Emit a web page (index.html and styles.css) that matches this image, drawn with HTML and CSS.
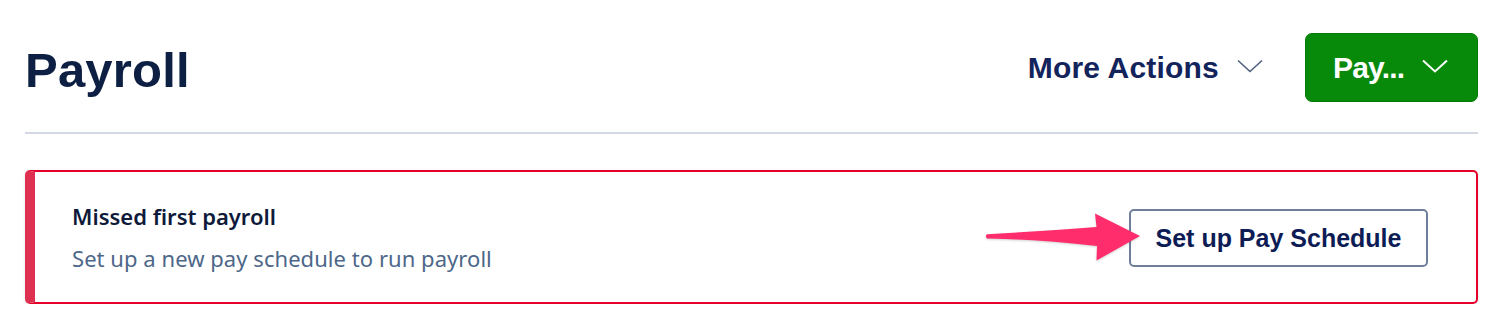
FILE: index.html
```html
<!DOCTYPE html>
<html lang="en">
<head>
<meta charset="utf-8">
<title>Payroll</title>
<link rel="stylesheet" href="styles.css">
</head>
<body>
<div class="page">
  <header class="page-header">
    <h1 class="page-title">Payroll</h1>
    <div class="header-actions">
      <button class="link-menu" type="button">
        <span>More Actions</span>
        <svg class="chev" width="26" height="14" viewBox="0 0 26 14"><path d="M1 1.5 L13 12.5 L25 1.5" fill="none" stroke="currentColor" stroke-width="1.6"/></svg>
      </button>
      <button class="primary-menu" type="button">
        <span>Pay...</span>
        <svg class="chev" width="26" height="14" viewBox="0 0 26 14"><path d="M1 1.5 L13 12.5 L25 1.5" fill="none" stroke="currentColor" stroke-width="2"/></svg>
      </button>
    </div>
  </header>
  <hr class="divider">
  <section class="alert">
    <div class="alert-text">
      <div class="alert-title">Missed first payroll</div>
      <div class="alert-body">Set up a new pay schedule to run payroll</div>
    </div>
    <button class="outline-btn" type="button">Set up Pay Schedule</button>
    <svg class="annot-arrow" width="180" height="75" viewBox="0 0 180 75">
      <path d="M7 33.2 Q60 30.5 116.5 26 L115 12.5 L160 35 L116.5 59.5 L117 45 Q60 38.5 7 37.6 Q4.8 35.4 7 33.2 Z" fill="#ff2d6b"/>
    </svg>
  </section>
</div>
</body>
</html>
```
FILE: styles.css
```css
* { box-sizing: border-box; }
html, body { margin: 0; padding: 0; background: #ffffff; }
body { font-family: "Liberation Sans", Arial, sans-serif; }

.page {
  padding: 33px 22px 0 25px;
  width: 1500px;
}

.page-header {
  display: flex;
  align-items: center;
  justify-content: space-between;
  height: 69px;
}

.page-title {
  margin: 0;
  font-size: 49px;
  font-weight: 700;
  color: #0d1f43;
  letter-spacing: 0.2px;
  position: relative;
  top: 2px;
}

.header-actions {
  display: flex;
  align-items: center;
  gap: 42px;
  height: 100%;
}

.link-menu {
  display: flex;
  align-items: center;
  gap: 18px;
  background: none;
  border: 0;
  padding: 0;
  font-family: "Liberation Sans", Arial, sans-serif;
  font-size: 30px;
  font-weight: 700;
  letter-spacing: 0.2px;
  color: #13235b;
  cursor: pointer;
}
.link-menu .chev { color: #4f5f7f; margin-top: -3px; }

.primary-menu {
  display: flex;
  align-items: center;
  gap: 18px;
  height: 69px;
  width: 173px;
  padding: 0 0 0 27px;
  background: #078a0a;
  border: 1px solid #067a08;
  border-radius: 7px;
  color: #ffffff;
  font-family: "Liberation Sans", Arial, sans-serif;
  font-size: 30px;
  font-weight: 700;
  letter-spacing: -0.8px;
  cursor: pointer;
}
.primary-menu .chev { margin-top: -3px; }

.divider {
  margin: 30px 0 0 0;
  border: 0;
  height: 2px;
  background: #d3d8e3;
}

.alert {
  position: relative;
  margin-top: 36px;
  height: 134px;
  display: flex;
  align-items: center;
  justify-content: space-between;
  border: 2px solid #e5002b;
  border-left: 10px solid #de3050;
  border-radius: 5px;
  padding: 0 48px 0 37px;
  box-shadow: 0 1px 3px rgba(20, 30, 60, 0.12);
}

.alert-text {
  display: flex;
  flex-direction: column;
  gap: 14px;
  margin-top: -1px;
  font-family: "Noto Sans", "Open Sans", sans-serif;
}

.alert-title {
  font-size: 22px;
  font-weight: 600;
  color: #0f1a3a;
  line-height: 28px;
}

.alert-body {
  font-size: 22px;
  font-weight: 400;
  color: #4d6789;
  line-height: 28px;
  letter-spacing: 0.05px;
}

.outline-btn {
  height: 58px;
  width: 299px;
  margin-top: 2px;
  background: #ffffff;
  border: 2px solid #6f7f9a;
  border-radius: 5px;
  font-family: "Liberation Sans", Arial, sans-serif;
  font-size: 25px;
  font-weight: 700;
  color: #0d1c55;
  cursor: pointer;
}

.annot-arrow {
  position: absolute;
  left: 945px;
  top: 29px;
  filter: drop-shadow(0 1px 1px rgba(0,0,0,0.18));
}
```
